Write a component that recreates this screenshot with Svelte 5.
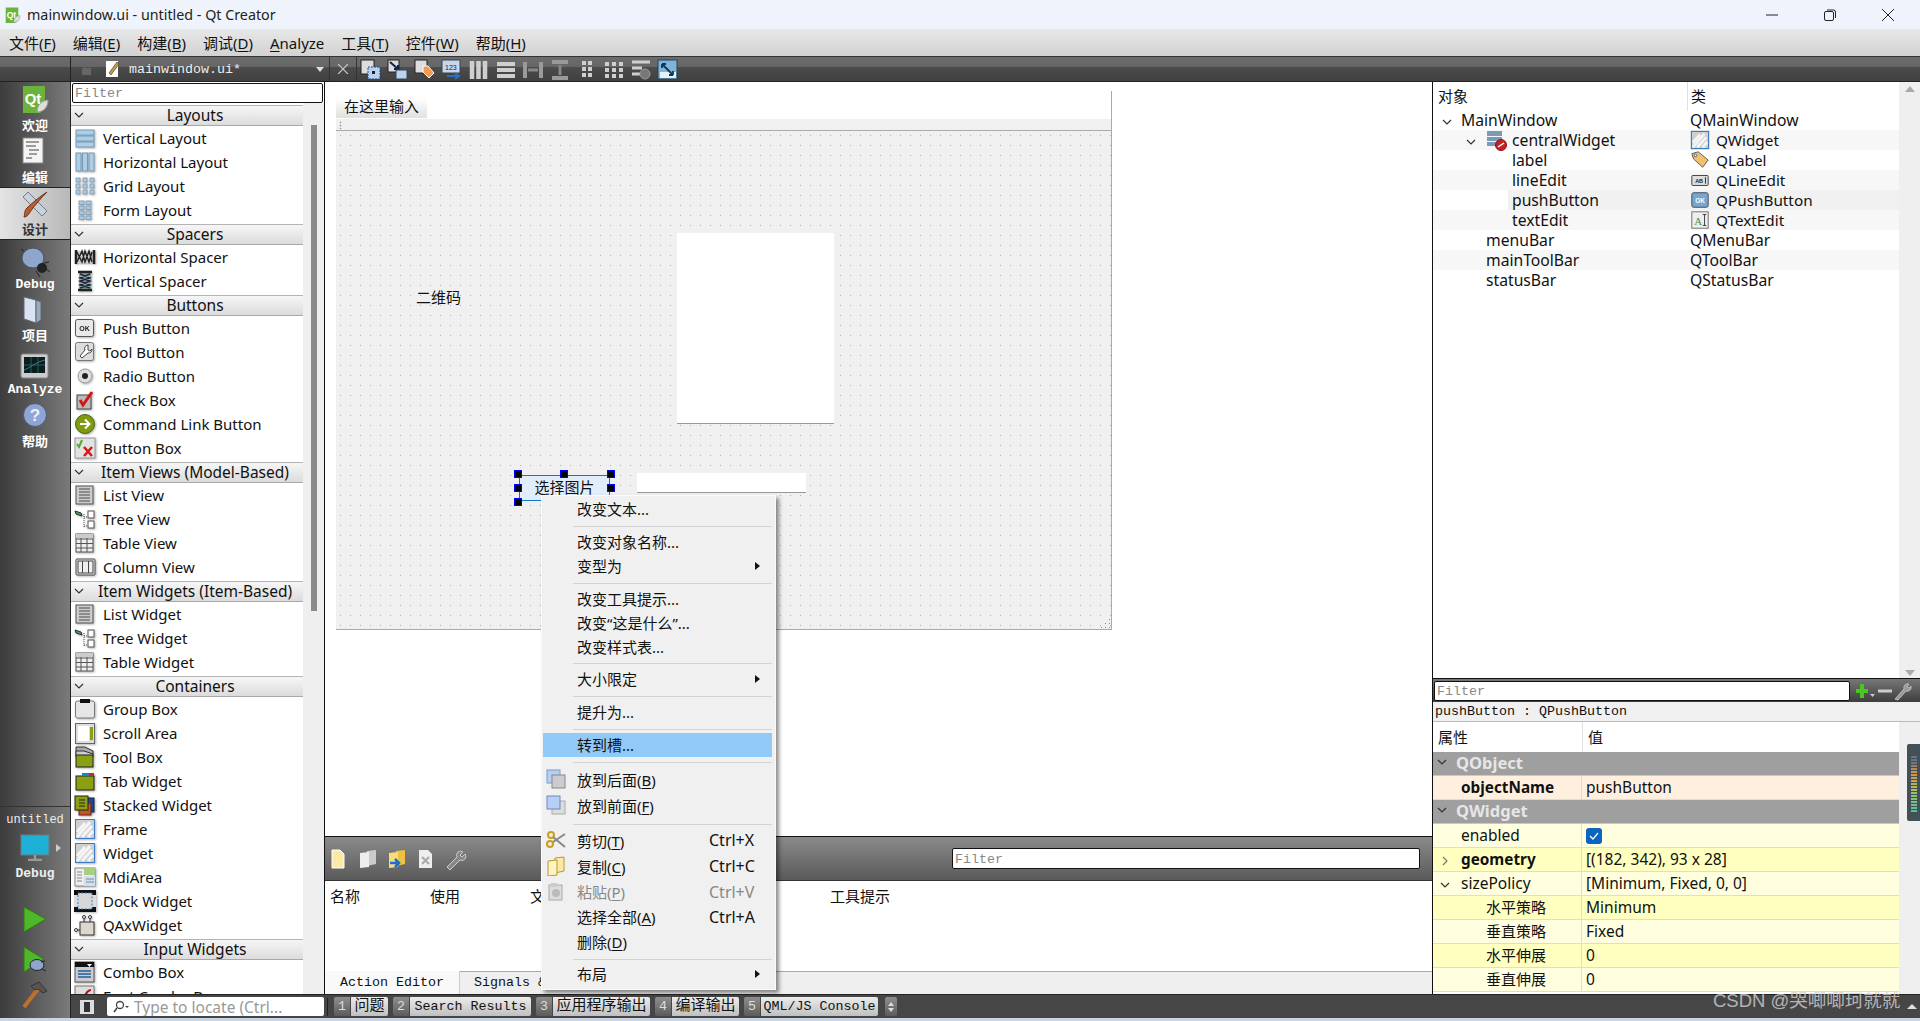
<script>
  const box = '<rect x="2" y="2" width="17" height="18" fill="#ccc" stroke="#555"/>';
  const lines = [5,8,11,14,17].map(y => `<path d="M5 ${y}h11" stroke="#777" stroke-width="1.5"/>`).join('');
  const stripes = '<path d="M3 14l8-9M3 19l13-15M8 19l10-11M14 19l5-6" stroke="#f4f4f4" stroke-width="3"/>';
  const cell = (x, y, w = 4, h = 4) => `<rect x="${x}" y="${y}" width="${w}" height="${h}" fill="#a9cbe6" stroke="#7d98ae" stroke-width=".8"/>`;
  const icons = {
    vlayout: [3, 9, 15].map(y => `<rect x="2" y="${y}" width="18" height="5" fill="#a9cfea" stroke="#7d98ae"/>`).join(''),
    hlayout: [2, 8.5, 15].map(x => `<rect x="${x}" y="2" width="5" height="18" fill="#a9cfea" stroke="#7d98ae"/>`).join(''),
    grid: [3, 9, 15].flatMap(y => [2, 9, 16].map(x => cell(x, y))).join(''),
    form: [2, 7, 12, 17].flatMap(y => [5, 12].map(x => cell(x, y, 5, 3.5))).join(''),
    hspacer: '<rect x="1" y="5" width="20" height="12" fill="#ccc"/><path d="M2 4v14M20 4v14" stroke="#222" stroke-width="2.5"/><path d="M3 16l5-11 3 11 4-11 3 11M3 6l5 10 3-11 4 11 3-10" fill="none" stroke="#222" stroke-width="1.4"/>',
    vspacer: '<rect x="5" y="2" width="12" height="18" fill="#8aa"/><path d="M4 2h14M4 20h14" stroke="#222" stroke-width="2.5"/><path d="M6 4l10 4-10 3 10 4-10 3M16 4L6 8l10 3-10 4 10 3" fill="none" stroke="#223" stroke-width="1.4"/>',
    push: '<rect x="1.500" y="2.500" width="18" height="17" rx="2" fill="#e8e8e8" stroke="#555"/><text x="10.500" y="14" font-size="7" font-family="Liberation Sans" font-weight="700" text-anchor="middle" fill="#222">OK</text>',
    tool: '<rect x="1.500" y="1.500" width="18" height="18" rx="2" fill="#ddd" stroke="#777"/><path d="M14 4a3.500 3.500 0 0 0-3 5l-5 6 2 2 6-5a3.500 3.500 0 0 0 4-4l-2 2-2-1v-2z" fill="#fff" stroke="#444"/>',
    radio: '<circle cx="11" cy="11" r="7" fill="#ddd" stroke="#999"/><circle cx="11" cy="11" r="3" fill="#222"/>',
    check: '<rect x="3" y="6" width="14" height="14" fill="#bbb" stroke="#444"/><path d="M6 11l3 5 9-13" fill="none" stroke="#d01818" stroke-width="3"/>',
    cmd: '<circle cx="11" cy="11" r="9.500" fill="#7d9c10" stroke="#4b6608"/><path d="M6 11h9M11 6.500l4.500 4.500-4.500 4.500" fill="none" stroke="#fff" stroke-width="2"/>',
    btnbox: '<rect x="1" y="1" width="20" height="20" fill="#e2e2e2" stroke="#999"/><path d="M3 7l2 3 3-7" fill="none" stroke="#55a830" stroke-width="2"/><path d="M10 10l8 9M18 10l-8 9" stroke="#d01818" stroke-width="2.500"/>',
    list: box + lines,
    tree: '<path d="M1 3l6 2 1 3-6-2z" fill="#5a9a3a" stroke="#234"/><path d="M10 6v14M10 9h4M10 18h4" stroke="#555" stroke-dasharray="1 1"/><rect x="14" y="3" width="6" height="7" fill="#fff" stroke="#555"/><rect x="14" y="13" width="6" height="7" fill="#fff" stroke="#555"/>',
    table: '<rect x="2" y="2" width="17" height="18" fill="#eee" stroke="#555"/><path d="M2 7h17M2 11.500h17M2 16h17M7 2v18M13 2v18" stroke="#555"/><rect x="2" y="2" width="17" height="4" fill="#ccc"/>',
    column: '<rect x="2" y="3" width="19" height="16" rx="1" fill="#eee" stroke="#444"/><path d="M8.500 5v12M14.500 5v12" stroke="#444"/><rect x="4" y="5" width="15" height="12" fill="none" stroke="#444"/>',
    group: '<rect x="1.500" y="3" width="19" height="17" rx="2" fill="#e6e6e6" stroke="#777"/><rect x="6" y="1" width="10" height="4" fill="#111"/>',
    scroll: '<rect x="1.500" y="1.500" width="19" height="20" fill="#ddd" stroke="#666"/><rect x="4" y="4" width="11" height="15" fill="#fff"/><rect x="16" y="5" width="3" height="13" fill="#8aa010"/>',
    toolbox: '<path d="M2 1h9l8 4v3H2z" fill="#aaa" stroke="#333"/><path d="M2 5h8l9 3v3H2z" fill="#ccc" stroke="#333"/><rect x="2" y="9" width="17" height="12" fill="#8aa010" stroke="#222"/>',
    tab: '<rect x="2" y="6" width="18" height="14" fill="#8aa010" stroke="#222"/><rect x="8" y="3" width="7" height="3" fill="#1a7fd0"/><rect x="15" y="3" width="5" height="3" fill="#c03020"/>',
    stacked: '<rect x="12" y="4" width="8" height="14" fill="#1a4aa0" stroke="#123"/><rect x="5" y="9" width="12" height="12" fill="#c0581a" stroke="#622"/><rect x="1" y="2" width="13" height="14" fill="#8aa010" stroke="#222"/><path d="M5 6h6M5 9h6M5 12h6" stroke="#222"/>',
    frame: '<rect x="1.500" y="1.500" width="19" height="19" fill="#cfcfcf" stroke="#3b7cc4"/>' + stripes + '<rect x="1.500" y="1.500" width="19" height="19" fill="none" stroke="#3b7cc4"/>',
    mdi: '<rect x="1" y="2" width="20" height="18" fill="#eee" stroke="#888"/><rect x="10" y="2" width="11" height="7" fill="#a6cf80"/><rect x="10" y="10" width="11" height="10" fill="#cfe0f2"/><path d="M3 6h5M3 9h5M3 12h5M3 15h5M12 13h8M12 16h8" stroke="#888"/>',
    dock: '<rect x="0" y="0" width="22" height="22" fill="#111"/><rect x="0" y="5" width="22" height="12" fill="#ddd"/><rect x="4" y="3" width="14" height="16" fill="#d8d8d8" stroke="#3b7cc4" stroke-dasharray="2 1.500"/>',
    qax: '<rect x="6" y="8" width="14" height="13" fill="#dcd8cc" stroke="#333"/><path d="M10 8V4M16 8V4M6 16H2" stroke="#333"/><circle cx="10" cy="3" r="1.500" fill="#fff" stroke="#333"/><circle cx="16" cy="3" r="1.500" fill="#fff" stroke="#333"/><circle cx="2" cy="16" r="1.500" fill="#fff" stroke="#333"/>',
    combo: '<rect x="1" y="1" width="19" height="20" fill="#ccc" stroke="#555"/><rect x="1" y="1" width="19" height="5" fill="#111"/><path d="M13 3h5l-2.500 3z" fill="#fff"/><path d="M4 10h13M4 13h13M4 16h13" stroke="#4a78b0" stroke-width="2"/>',
    font: '<rect x="1" y="1" width="19" height="20" fill="#ddd" stroke="#777"/><path d="M6 20c4-4 5-15 11-15" fill="none" stroke="#b01818" stroke-width="2"/>',
    label: '<path d="M2 4l7-2 11 9-6 8L4 10z" fill="#f0c070" stroke="#555"/><circle cx="6" cy="6" r="1.500" fill="#fff" stroke="#555"/>',
    lineedit: '<rect x="2" y="6" width="18" height="11" rx="1" fill="#ddd" stroke="#333"/><text x="10" y="14" font-size="6" font-family="Liberation Sans" font-weight="700" text-anchor="middle" fill="#222">AB</text><path d="M17 8v7" stroke="#222"/>',
    pushblue: '<rect x="2" y="3" width="18" height="16" rx="2" fill="#7aa6cc" stroke="#345"/><text x="11" y="14" font-size="7" font-family="Liberation Sans" font-weight="700" text-anchor="middle" fill="#fff">OK</text>',
    textedit: '<rect x="2" y="2" width="18" height="18" fill="#eee" stroke="#666"/><text x="9" y="16" font-size="12" font-family="Liberation Serif" text-anchor="middle" fill="#4a8a4a">A</text><path d="M14 5h4M16 5v12M14 17h4" stroke="#333"/>',
    central: '<rect x="1" y="1" width="15" height="5" fill="#7a9ab8"/><rect x="1" y="7" width="15" height="4" fill="#7a9ab8"/><rect x="1" y="12" width="15" height="4" fill="#7a9ab8"/><circle cx="15" cy="15" r="5.500" fill="#c82020" stroke="#812"/><path d="M12 17l6-4" stroke="#fff" stroke-width="1.500"/>'
  };
  const sections = [
    ['Layouts', [['Vertical Layout','vlayout'],['Horizontal Layout','hlayout'],['Grid Layout','grid'],['Form Layout','form']]],
    ['Spacers', [['Horizontal Spacer','hspacer'],['Vertical Spacer','vspacer']]],
    ['Buttons', [['Push Button','push'],['Tool Button','tool'],['Radio Button','radio'],['Check Box','check'],['Command Link Button','cmd'],['Button Box','btnbox']]],
    ['Item Views (Model-Based)', [['List View','list'],['Tree View','tree'],['Table View','table'],['Column View','column']]],
    ['Item Widgets (Item-Based)', [['List Widget','list'],['Tree Widget','tree'],['Table Widget','table']]],
    ['Containers', [['Group Box','group'],['Scroll Area','scroll'],['Tool Box','toolbox'],['Tab Widget','tab'],['Stacked Widget','stacked'],['Frame','frame'],['Widget','frame'],['MdiArea','mdi'],['Dock Widget','dock'],['QAxWidget','qax']]],
    ['Input Widgets', [['Combo Box','combo'],['Font Combo Box','font']]]
  ];
  const menuBar = [['文件(','F',')'],['编辑(','E',')'],['构建(','B',')'],['调试(','D',')'],['','A','nalyze'],['工具(','T',')'],['控件(','W',')'],['帮助(','H',')']];
  const contextMenu = [
    {p:'改变文本...'},{sep:9},{p:'改变对象名称...'},{p:'变型为',sub:1},{sep:9},{p:'改变工具提示...'},{p:'改变“这是什么”...'},{p:'改变样式表...'},{sep:8},
    {p:'大小限定',sub:1},{sep:9},{p:'提升为...'},{sep:9},{p:'转到槽...',hi:1},{sep:10},
    {p:'放到后面(',u:'B',a:')',h:26,ic:'back'},{p:'放到前面(',u:'F',a:')',h:26,ic:'front'},{sep:9},
    {p:'剪切(',u:'T',a:')',k:'Ctrl+X',h:26,ic:'cut'},{p:'复制(',u:'C',a:')',k:'Ctrl+C',h:26,ic:'copy'},{p:'粘贴(',u:'P',a:')',k:'Ctrl+V',h:25,off:1,ic:'paste'},
    {p:'选择全部(',u:'A',a:')',k:'Ctrl+A',h:25},{p:'删除(',u:'D',a:')',h:25},{sep:7},{p:'布局',sub:1}
  ];
  const menuIcons = {
    back:'<rect x="1" y="1" width="13" height="13" fill="#b6cff2" stroke="#7a9ad0"/><rect x="6" y="6" width="13" height="13" fill="#ccc" stroke="#888"/>',
    front:'<rect x="6" y="6" width="13" height="13" fill="#ddd" stroke="#aaa"/><rect x="1" y="1" width="13" height="13" fill="#b6cff2" stroke="#6a8ac0"/>',
    cut:'<circle cx="4" cy="14" r="3" fill="none" stroke="#c8a020" stroke-width="2"/><circle cx="5" cy="5" r="3" fill="none" stroke="#c8a020" stroke-width="2"/><path d="M7 12L19 4M7 7l12 10" stroke="#888" stroke-width="2"/>',
    copy:'<path d="M9 2l9-1v14l-9 2z" fill="#fbe9a6" stroke="#b89a30"/><path d="M2 5l9-1v15l-9 1z" fill="#fff3c0" stroke="#b89a30"/>',
    paste:'<rect x="3" y="3" width="13" height="15" fill="#ddd" stroke="#aaa"/><circle cx="10" cy="11" r="4" fill="#bbb"/><rect x="5" y="1" width="6" height="4" fill="#ccc"/>'
  };
  const tools = [
    '<rect x="1" y="1" width="13" height="14" fill="#ddd" stroke="#222"/><rect x="8" y="8" width="12" height="12" fill="#bcd2ec" stroke="#1a4a90" stroke-dasharray="2 1"/><rect x="12" y="12" width="3" height="3" fill="#124"/>',
    '<rect x="1" y="1" width="11" height="12" fill="#ddd" stroke="#222"/><path d="M3 3l8 7M7 10h4V6" stroke="#124" stroke-width="2" fill="none"/><rect x="9" y="11" width="11" height="9" fill="#bcd2ec" stroke="#345"/>',
    '<rect x="1" y="1" width="12" height="13" fill="#ddd" stroke="#222"/><path d="M9 7h5l6 7-5 5-6-6z" fill="#f39a50" stroke="#fff"/>',
    '<rect x="1" y="1" width="18" height="13" fill="#c9d6ea" stroke="#345"/><text x="4" y="11" font-size="7" font-family="Liberation Sans" fill="#124">123</text><path d="M6 17h12M14 14l4 3-4 3" fill="none" stroke="#2a70c0" stroke-width="2"/>',
    '<path d="M4 2v18M10.500 2v18M17 2v18" stroke="#cfcfcf" stroke-width="4.500"/>',
    '<path d="M2 5h18M2 11h18M2 17h18" stroke="#cfcfcf" stroke-width="4"/>',
    '<path d="M3 3v16M19 3v16" stroke="#9a9a9a" stroke-width="4"/><path d="M6 11h10" stroke="#888" stroke-width="3"/>',
    '<path d="M3 3h16M3 19h16" stroke="#9a9a9a" stroke-width="4"/><path d="M11 6v10" stroke="#888" stroke-width="3"/>',
    '<path d="M6 4h4M12 4h4M6 10h4M12 10h4M6 16h4M12 16h4" stroke="#cfcfcf" stroke-width="4"/>',
    '<path d="M2 5h4M9 5h4M16 5h4M2 11h4M9 11h4M16 11h4M2 17h4M9 17h4M16 17h4" stroke="#cfcfcf" stroke-width="4"/>',
    '<path d="M2 3h18M2 9h10M2 15h8" stroke="#cfcfcf" stroke-width="3"/><circle cx="15" cy="15" r="5" fill="#777" stroke="#999"/>',
    '<rect x="1" y="1" width="19" height="19" fill="#7fb3d8" stroke="#246"/><rect x="3" y="13" width="16" height="6" fill="#eee"/><path d="M5 5l11 11M5 5h4M5 5v4M16 16h-4M16 16v-4" stroke="#0a3a5a" stroke-width="1.800" fill="none"/>'
  ];
  const modeIcons = {
    qt:'<path d="M3 1h22v22l-5 5H3z" fill="#6cb33e"/><text x="13" y="19" font-size="15" font-weight="700" font-family="Liberation Sans" text-anchor="middle" fill="#fff">Qt</text><path d="M17 27c0-7 4-11 11-12 0 7-4 12-11 12z" fill="#ddd" stroke="#999"/>',
    edit:'<rect x="3" y="1" width="20" height="25" fill="#f4f4f4" stroke="#888"/><path d="M6 5h13M6 9h10M9 13h10M9 17h8M6 21h6" stroke="#444"/>',
    design:'<path d="M3 8l5-5 19 19-5 5z" fill="#c8d2dc" stroke="#778"/><path d="M4 28c3 0 4-2 6-5 5-7 12-15 17-20-6 4-14 10-20 16-3 3-2 6-3 9z" fill="#b8602a" stroke="#632"/>',
    bug:'<path d="M5 5L1 2M26 22l4 3M16 24l4 6M24 16l5-1" stroke="#222"/><ellipse cx="13" cy="11" rx="11" ry="10" fill="#8ea6cc" stroke="#455"/><ellipse cx="22" cy="21" rx="5" ry="5" fill="#222"/>',
    folder:'<path d="M4 2l12 3v23L4 24z" fill="#d8e4f4" stroke="#667"/><path d="M16 5l5 2v18l-5 3z" fill="#9ab" stroke="#667"/>',
    scope:'<rect x="1" y="2" width="27" height="24" rx="2" fill="#ccc" stroke="#888"/><rect x="4" y="5" width="21" height="16" fill="#0a1e22"/><path d="M4 13h21M11 5v16M18 5v16" stroke="#2a5a5a"/><path d="M4 18c6-2 12-8 21-10" stroke="#3a7a7a" fill="none"/>',
    help:'<circle cx="15" cy="14" r="11.500" fill="#8ea6d6" stroke="#556"/><text x="15" y="20" font-size="17" font-family="Liberation Sans" text-anchor="middle" fill="#eef">?</text>',
    monitor:'<rect x="1" y="1" width="28" height="20" fill="#1fb0d8" stroke="#777"/><path d="M15 21v4M8 26h14" stroke="#999" stroke-width="2.500"/>',
    play:'<path d="M3 1l22 12L3 26z" fill="#4fb82a" stroke="#2f7a10"/>',
    playdbg:'<path d="M3 1l20 12L3 26z" fill="#4fb82a" stroke="#2f7a10"/><ellipse cx="16" cy="19" rx="7" ry="5.500" fill="#8ea6cc" stroke="#223"/><path d="M21 23l4 2M20 16l4-1" stroke="#222"/>',
    hammer:'<path d="M3 26L17 8" stroke="#c0702a" stroke-width="4"/><path d="M10 5l8-4 8 9-4 2-5-4-3 1z" fill="#555" stroke="#333"/>'
  };
  const modes = [['qt','欢迎'],['edit','编辑'],['design','设计',1],['bug','Debug'],['folder','项目'],['scope','Analyze'],['help','帮助']];
  const tree = [
    {n:'MainWindow',c:'QMainWindow',d:1461,open:1445},
    {n:'centralWidget',c:'QWidget',d:1512,open:1469,ni:'central',i:'frame',alt:1},
    {n:'label',c:'QLabel',d:1512,i:'label'},
    {n:'lineEdit',c:'QLineEdit',d:1512,i:'lineedit',alt:1},
    {n:'pushButton',c:'QPushButton',d:1512,i:'pushblue',sel:1},
    {n:'textEdit',c:'QTextEdit',d:1512,i:'textedit',alt:1},
    {n:'menuBar',c:'QMenuBar',d:1486},
    {n:'mainToolBar',c:'QToolBar',d:1486,alt:1},
    {n:'statusBar',c:'QStatusBar',d:1486}
  ];
  const props = [
    {group:'QObject'},
    {n:'objectName',v:'pushButton',b:1,t:'peach'},
    {group:'QWidget'},
    {n:'enabled',chk:1,t:'y1'},
    {n:'geometry',v:'[(182, 342), 93 x 28]',b:1,t:'y2',car:'r'},
    {n:'sizePolicy',v:'[Minimum, Fixed, 0, 0]',t:'y1',car:'d'},
    {n:'水平策略',v:'Minimum',t:'y2',sub:1},
    {n:'垂直策略',v:'Fixed',t:'y1',sub:1},
    {n:'水平伸展',v:'0',t:'y2',sub:1},
    {n:'垂直伸展',v:'0',t:'y1',sub:1}
  ];
  const actionTools = [
    '<path d="M3 2h8l4 4v14H3z" fill="#fbeaa6" stroke="#fff"/>',
    '<path d="M9 3l9-1v14l-9 2z" fill="#ccc"/><path d="M2 5l9-1v15l-9 1z" fill="#eee"/>',
    '<path d="M9 3l9-1v14l-9 2z" fill="#f0c040"/><path d="M2 5l9-1v15l-9 1z" fill="#f7dd80"/><path d="M3 15h7M8 11l4 4-4 4" stroke="#1a70d0" stroke-width="2.500" fill="none"/>',
    '<path d="M3 2h9l4 4v14H3z" fill="#eee"/><path d="M6 9l7 7M13 9l-7 7" stroke="#aaa" stroke-width="2"/>',
    '<path d="M2 19l10-10a4 4 0 0 1 6-5l-3 3 2 2 3-3a4 4 0 0 1-5 6L5 22z" fill="#888" stroke="#ccc"/>'
  ];
  const outputs = [['1','问题',37,1],['2','Search Results',121],['3','应用程序输出',97,1],['4','编译输出',67,1],['5','QML/JS Console',117]];
</script>

{#snippet chev(kind)}
  <svg class="chev" width="10" height="10" viewBox="0 0 10 10">
    {#if kind === 'r'}
      <path d="M3 1l4 4-4 4" fill="none" stroke="#777" stroke-width="1.200"/>
    {:else}
      <path d="M1 3l4 4 4-4" fill="none" stroke="#333" stroke-width="1.200"/>
    {/if}
  </svg>
{/snippet}

{#snippet wicon(name)}
  <svg class="wi" width="22" height="22" viewBox="0 0 22 22">{@html icons[name]}</svg>
{/snippet}

<div class="win">
  <header class="title">
    <svg class="qt" width="18" height="16" viewBox="0 0 28 28">{@html modeIcons.qt}</svg>
    <span>mainwindow.ui - untitled - Qt Creator</span>
    <div class="wctl">
      <svg width="12" height="12" viewBox="0 0 12 12"><path d="M0 6h12" stroke="#222"/></svg>
      <svg width="12" height="12" viewBox="0 0 12 12"><rect x=".5" y="2.500" width="9" height="9" rx="1.500" fill="none" stroke="#222"/><path d="M3 1h6.500a2 2 0 0 1 2 2v6" fill="none" stroke="#222"/></svg>
      <svg width="12" height="12" viewBox="0 0 12 12"><path d="M0 0l12 12M12 0L0 12" stroke="#222"/></svg>
    </div>
  </header>

  <nav class="menubar">
    {#each menuBar as m}
      <span>{m[0]}<u>{m[1]}</u>{m[2]}</span>
    {/each}
  </nav>

  <div class="docbar">
    <div class="docleft"></div>
    <svg class="lock" width="14" height="14" viewBox="0 0 14 14"><rect x="1" y="6" width="9" height="7" fill="#666"/><path d="M4 6V3a3 3 0 0 1 6 0" fill="none" stroke="#666" stroke-width="1.500"/></svg>
    <svg class="docic" width="14" height="18" viewBox="0 0 14 18"><path d="M1 1h12v16H1z" fill="#fff"/><path d="M4 13L12 2l2 2-8 11z" fill="#c89a40" stroke="#333" stroke-width=".6"/></svg>
    <span class="docname">mainwindow.ui*</span>
    <span class="dd"></span>
    <span class="vsep first"></span>
    <svg class="closex" width="10" height="10" viewBox="0 0 10 10"><path d="M0 0l10 10M10 0L0 10" stroke="#ccc" stroke-width="1.200"/></svg>
    <span class="vsep"></span>
    <div class="tools">
      {#each tools as t}
        <svg width="21" height="21" viewBox="0 0 21 21">{@html t}</svg>
      {/each}
    </div>
  </div>

  <div class="main">
    <aside class="modes">
      {#each modes as m}
        <div class="mode" class:on={m[2]}>
          <svg width="30" height="30" viewBox="0 0 30 30">{@html modeIcons[m[0]]}</svg>
          <span>{m[1]}</span>
        </div>
      {/each}
      <div class="target">
        <span class="tname">untitled</span>
        <div class="tmon">
          <svg width="30" height="27" viewBox="0 0 30 27">{@html modeIcons.monitor}</svg>
          <i></i>
        </div>
        <span class="tcfg">Debug</span>
        <svg class="run r1" width="28" height="28" viewBox="0 0 28 28">{@html modeIcons.play}</svg>
        <svg class="run r2" width="28" height="28" viewBox="0 0 28 28">{@html modeIcons.playdbg}</svg>
        <svg class="run" width="28" height="28" viewBox="0 0 28 28">{@html modeIcons.hammer}</svg>
      </div>
    </aside>

    <div class="stack">
      <div class="work">
        <section class="wbox">
          <div class="wfilter"><div class="field mono">Filter</div></div>
          <div class="wbody">
            <div class="wlist">
              {#each sections as s}
                <div class="shead">{@render chev()}<span>{s[0]}</span></div>
                {#each s[1] as it}
                  <div class="witem">{@render wicon(it[1])}<span>{it[0]}</span></div>
                {/each}
              {/each}
            </div>
            <div class="wscroll"><div class="wthumb"></div></div>
          </div>
        </section>

        <section class="center">
          <div class="canvas">
            <div class="form">
              <div class="fmenu"><span>在这里输入</span></div>
              <div class="ftool"><i></i></div>
              <div class="fbody">
                <span class="flabel">二维码</span>
                <div class="ftext"></div>
                <div class="fline"></div>
                <div class="fbtn">选择图片</div>
                {#each [[0,0],[46,0],[93,0],[0,14],[93,14],[0,28]] as h}
                  <i class="handle" style="left:{514 - 336 + h[0]}px;top:{470 - 131 + h[1]}px"></i>
                {/each}
                <svg class="grip" width="12" height="12" viewBox="0 0 12 12"><path d="M10 2h1v1h-1zM10 6h1v1h-1zM6 6h1v1H6zM10 10h1v1h-1zM6 10h1v1H6zM2 10h1v1H2z" fill="#888"/></svg>
              </div>
            </div>
          </div>
          <div class="action">
            <div class="atool">
              <div class="aicons">
                {#each actionTools as t}
                  <svg width="22" height="22" viewBox="0 0 22 22">{@html t}</svg>
                {/each}
              </div>
              <div class="field mono afilter">Filter</div>
            </div>
            <div class="ahead">
              <span class="c1">名称</span><span class="c2">使用</span><span class="c3">文本</span><span class="c4">工具提示</span>
            </div>
            <div class="ablank"></div>
            <div class="atabs">
              <span class="tabon mono">Action Editor</span>
              <span class="taboff mono">Signals &amp; Slots Editor</span>
            </div>
          </div>
        </section>

        <section class="right">
          <div class="inspector">
            <div class="itree">
              <div class="ihead"><span>对象</span><span>类</span></div>
              {#each tree as r}
                <div class="trow" class:alt={r.alt} class:sel={r.sel}>
                  <div class="tc1">
                    {#if r.open}<span class="tcar" style="left:{r.open - 1433 - 3}px">{@render chev()}</span>{/if}
                    {#if r.ni}<svg class="tni" width="21" height="21" viewBox="0 0 21 21">{@html icons[r.ni]}</svg>{/if}
                    <span style="padding-left:{r.d - 1433}px">{r.n}</span>
                  </div>
                  <div class="tc2" class:noi={!r.i}>
                    {#if r.i}<svg width="20" height="20" viewBox="0 0 22 22">{@html icons[r.i]}</svg>{/if}
                    <span>{r.c}</span>
                  </div>
                </div>
              {/each}
            </div>
            <div class="vbar"><b class="up"></b><b class="down"></b></div>
          </div>

          <div class="pfilter">
            <div class="field mono">Filter</div>
            <svg width="22" height="20" viewBox="0 0 22 20"><path d="M8 3v14M2 10h12" stroke="#46c81e" stroke-width="4"/><path d="M16 13h5l-2.500 3z" fill="#ccc"/></svg>
            <svg width="16" height="20" viewBox="0 0 16 20"><path d="M1 10h14" stroke="#ccc" stroke-width="3"/></svg>
            <svg width="18" height="20" viewBox="0 0 18 20"><path d="M1 18L10 8a4 4 0 0 1 5-5l-2 3 2 1 2-2a4 4 0 0 1-5 5l-8 9z" fill="#999" stroke="#bbb"/></svg>
          </div>
          <div class="pobj mono">pushButton : QPushButton</div>
          <div class="peditor">
            <div class="plist">
              <div class="phead"><span>属性</span><span>值</span></div>
              {#each props as p}
                {#if p.group}
                  <div class="pgroup">{@render chev()}<span>{p.group}</span></div>
                {:else}
                  <div class="prow {p.t}">
                    <div class="pn" class:bold={p.b} class:sub={p.sub}>
                      {#if p.car}<span class="pcar">{@render chev(p.car)}</span>{/if}
                      <span>{p.n}</span>
                    </div>
                    <div class="pv">
                      {#if p.chk}
                        <svg width="16" height="16" viewBox="0 0 16 16"><rect width="16" height="16" rx="3" fill="#0a64c0"/><path d="M4 8l3 3 5-6" fill="none" stroke="#fff" stroke-width="1.200"/></svg>
                      {:else}{p.v}{/if}
                    </div>
                  </div>
                {/if}
              {/each}
            </div>
            <div class="pbar"><div class="mini"></div></div>
          </div>
        </section>
      </div>

      <footer class="outbar">
        <span class="toggle"><i></i></span>
        <div class="locate">
          <svg width="18" height="14" viewBox="0 0 18 14"><circle cx="8" cy="5" r="3.500" fill="none" stroke="#444" stroke-width="1.300"/><path d="M5 8l-3 4" stroke="#444" stroke-width="1.500"/><path d="M13 6h4l-2 2z" fill="#444"/></svg>
          <span>Type to locate (Ctrl...</span>
        </div>
        <span class="osep"></span>
        {#each outputs as o}
          <div class="obtn"><b>{o[0]}</b><span class:cjk={o[3]} style="width:{o[2]}px">{o[1]}</span></div>
        {/each}
        <div class="ostep"><i></i><i></i></div>
        <div class="ocorner"></div>
      </footer>
    </div>
  </div>
  <div class="edge"></div>

  <div class="cmenu">
    {#each contextMenu as m}
      {#if m.sep}
        <div class="msep" style="height:{m.sep}px"></div>
      {:else}
        <div class="mitem" class:hi={m.hi} class:off={m.off} style="height:{m.h || 24}px">
          {#if m.ic}<svg class="mic" width="20" height="20" viewBox="0 0 20 20">{@html menuIcons[m.ic]}</svg>{/if}
          <span class="mt">{m.p}{#if m.u}<u>{m.u}</u>{m.a}{/if}</span>
          {#if m.k}<span class="mk">{m.k}</span>{/if}
          {#if m.sub}<i class="marrow"></i>{/if}
        </div>
      {/if}
    {/each}
  </div>

  <div class="mark">CSDN @哭唧唧珂就就</div>
</div>

<style>
  :global(body) { margin: 0; overflow: hidden; }
  .win {
    position: relative; width: 1920px; height: 1021px; display: flex; flex-direction: column; overflow: hidden;
    font-family: "Noto Sans", "Noto Sans CJK SC", sans-serif; font-size: 15px; color: #111; background: #fff;
  }
  .mono { font-family: "Liberation Mono", "Noto Sans CJK SC", monospace; }
  u { text-underline-offset: 2px; }

  .title { height: 29px; background: #eff3fb; display: flex; align-items: center; flex: none; font-size: 14.3px; color: #222; }
  .qt { margin: 0 6px 0 3px; }
  .wctl { margin-left: auto; display: flex; gap: 46px; padding-right: 26px; }
  .wctl svg { display: block; }

  .menubar { height: 27px; flex: none; display: flex; align-items: center; padding-left: 9px; gap: 17px; background: linear-gradient(#e8e8e8, #d2d2d2); font-size: 15px; border-bottom: 1px solid #333; }
  .menubar span { white-space: nowrap; }

  .docbar { height: 25px; flex: none; display: flex; align-items: center; background: linear-gradient(#6c6c6c 0, #666 40%, #4c4c4c 42%, #404040 100%); border-bottom: 1px solid #222; box-sizing: border-box; }
  .docleft { width: 70px; height: 100%; border-right: 1px solid #222; flex: none; }
  .lock { margin-left: 10px; flex: none; }
  .docic { margin-left: 10px; flex: none; }
  .docname { margin-left: 10px; width: 112px; font: 13.33px "Liberation Mono", monospace; color: #eee; }
  .dd { margin-left: 75px; border: 4px solid transparent; border-top: 5px solid #ddd; border-bottom: 0; flex: none; }
  .vsep { width: 1px; height: 100%; background: #333; flex: none; }
  .vsep.first { margin-left: 5px; }
  .closex { margin: 0 8px; flex: none; }
  .tools { display: flex; gap: 6px; margin-left: 3px; }
  .tools svg { display: block; flex: none; }

  .main { flex: 1; min-height: 0; display: flex; }
  .edge { height: 3px; flex: none; background: #c9d5e4; }

  .modes { width: 70px; flex: none; display: flex; flex-direction: column; background: linear-gradient(90deg, #3c3c3c, #7a7a7a); border-right: 1px solid #222; }
  .mode { height: 52.7px; flex: none; display: flex; flex-direction: column; align-items: center; justify-content: flex-end; padding-bottom: 1px; box-sizing: border-box; color: #fff; font: 700 13px "Liberation Mono", "Noto Sans CJK SC", monospace; }
  .mode svg { flex: none; margin-bottom: 0; }
  .mode.on { background: linear-gradient(90deg, #e4e4e4, #b8b8b8); color: #333; border-top: 1px solid #222; border-bottom: 1px solid #222; }
  .target { margin-top: auto; border-top: 1px solid #333; display: flex; flex-direction: column; align-items: center; color: #eee; padding: 5px 0 9px; font: 12px "Liberation Mono", monospace; }
  .tname { line-height: 16px; }
  .tmon { display: flex; align-items: center; margin-top: 6px; position: relative; }
  .tmon i { position: absolute; left: 36px; top: 10px; border: 4px solid transparent; border-left: 5px solid #ccc; border-right: 0; }
  .tcfg { font-weight: 700; font-size: 13px; line-height: 16px; margin: 5px 0 24px; }
  .run { flex: none; }
  .r1 { margin-bottom: 12px; }
  .r2 { margin-bottom: 7px; }

  .stack { flex: 1; min-width: 0; display: flex; flex-direction: column; }
  .work { flex: 1; min-height: 0; display: flex; }

  .field { background: #fff; border: 1px solid #111; border-radius: 2px; box-sizing: border-box; color: #888; font-size: 13.33px; line-height: 20px; padding-left: 2px; }

  .wbox { width: 253px; flex: none; display: flex; flex-direction: column; border-right: 1px solid #111; background: #efefef; box-sizing: content-box; }
  .wfilter { height: 21px; flex: none; padding: 1px 1px 0 1px; box-sizing: border-box; background: #fff; }
  .wfilter .field { height: 20px; }
  .wbody { flex: 1; min-height: 0; display: flex; overflow: hidden; }
  .wlist { width: 232px; flex: none; background: #fff; overflow: hidden; }
  .shead { height: 21px; margin-top: 2px; position: relative; display: flex; align-items: center; justify-content: center; box-sizing: border-box; background: linear-gradient(#f6f6f6, #dcdcdc); border-top: 1px solid #b4b4b4; border-bottom: 1px solid #a8a8a8; padding: 0 0 2px 16px; color: #111; font-size: 15.5px; white-space: nowrap; }
  .shead .chev { position: absolute; left: 3px; top: 4px; }
  .witem { height: 24px; display: flex; align-items: center; gap: 7px; padding-left: 3px; white-space: nowrap; }
  .wi { flex: none; filter: drop-shadow(1px 1px 1px rgba(0,0,0,.3)); }
  .wscroll { flex: 1; position: relative; }
  .wthumb { position: absolute; left: 8px; top: 22px; width: 6px; height: 486px; background: #8a8a8a; }

  .center { flex: 1; min-width: 0; display: flex; flex-direction: column; }
  .canvas { flex: 1; min-height: 0; background: #fff; padding: 9px 0 0 11px; overflow: hidden; }
  .form { width: 775px; height: 539px; display: flex; flex-direction: column; border-right: 1px solid #aaa; box-sizing: content-box; }
  .fmenu { height: 27px; flex: none; display: flex; align-items: flex-end; }
  .fmenu span { width: 91px; height: 20px; background: linear-gradient(#fff, #e0e0e0); text-align: center; font-size: 15px; line-height: 17px; }
  .ftool { height: 11px; flex: none; background: #f0f0f0; border-top: 1px solid #fff; border-bottom: 1px solid #aaa; position: relative; box-sizing: content-box; }
  .ftool i { position: absolute; left: 3px; top: 2px; width: 3px; height: 8px; background: radial-gradient(circle, #999 40%, transparent 50%) 0 0 / 3px 3px; }
  .fbody {
    flex: 1; position: relative; background-color: #b0b0b0; border-bottom: 1px solid #aaa;
    background-image: linear-gradient(90deg, transparent 1px, #f0f0f0 1px), linear-gradient(transparent 1px, #f0f0f0 1px);
    background-size: 10px 10px; background-position: 4px 4px;
  }
  .flabel { position: absolute; left: 80px; top: 156px; font-size: 15px; line-height: 20px; }
  .ftext { position: absolute; left: 341px; top: 102px; width: 157px; height: 190px; background: #fff; border-bottom: 1px solid #999; }
  .fline { position: absolute; left: 301px; top: 342px; width: 169px; height: 19px; background: #fff; border-bottom: 1px solid #999; }
  .fbtn { position: absolute; left: 183px; top: 344px; width: 91px; height: 26px; box-sizing: border-box; background: #e1edf9; border: 1px solid #0a78d0; text-align: center; font-size: 15px; line-height: 23px; }
  .handle { position: absolute; width: 6px; height: 6px; background: #000; border: 1px solid #00f; }
  .grip { position: absolute; right: 0; bottom: 0; }

  .action { height: 158px; flex: none; display: flex; flex-direction: column; border-top: 1px solid #111; box-sizing: border-box; }
  .atool { height: 44px; flex: none; display: flex; align-items: center; background: linear-gradient(#8a8a8a, #5a5a5a); border-bottom: 1px solid #333; box-sizing: border-box; }
  .aicons { display: flex; gap: 7px; padding-left: 4px; }
  .aicons svg { flex: none; display: block; }
  .afilter { margin-left: auto; margin-right: 12px; width: 468px; height: 21px; flex: none; line-height: 22px; }
  .ahead { height: 30px; flex: none; position: relative; font-size: 15px; line-height: 31px; }
  .ahead span { position: absolute; top: 0; }
  .c1 { left: 5px; } .c2 { left: 105px; } .c3 { left: 205px; } .c4 { left: 505px; }
  .ablank { flex: 1; }
  .atabs { height: 23px; flex: none; display: flex; background: #efefef; border-top: 1px solid #aaa; box-sizing: border-box; font-size: 13.33px; }
  .tabon { width: 135px; background: #f9f9f9; margin-top: -1px; text-align: center; line-height: 24px; color: #111; border-right: 1px solid #ccc; box-sizing: border-box; }
  .taboff { padding-left: 14px; line-height: 22px; color: #111; white-space: nowrap; }

  .right { width: 488px; flex: none; display: flex; flex-direction: column; border-left: 1px solid #111; box-sizing: border-box; }
  .inspector { height: 596px; flex: none; display: flex; }
  .itree { flex: 1; min-width: 0; font-size: 15.7px; }
  .ihead { height: 28px; display: grid; grid-template-columns: 254px 1fr; font-size: 15px; line-height: 29px; }
  .ihead span { padding-left: 5px; }
  .ihead span + span { border-left: 1px solid #e0e0e0; padding-left: 3px; }
  .trow { height: 20px; display: grid; grid-template-columns: 257px 1fr; line-height: 20px; }
  .alt { background: #f7f7f7; }
  .sel { background: linear-gradient(90deg, #fff 75px, #f1f1f1 75px); }
  .tc1 { position: relative; white-space: nowrap; }
  .tcar { position: absolute; top: 1px; }
  .tni { position: absolute; left: 53px; top: 0; }
  .tc2 { display: flex; align-items: center; gap: 6px; font-size: 15.3px; }
  .tc2.noi { font-size: 15.7px; }
  .tc2 svg { flex: none; }
  .vbar { width: 21px; flex: none; background: #efefef; position: relative; }
  .vbar b { position: absolute; left: 6px; border: 5px solid transparent; }
  .up { top: 4px; border-bottom: 6px solid #aaa !important; border-top: 0 !important; }
  .down { bottom: 2px; border-top: 6px solid #aaa !important; border-bottom: 0 !important; }

  .pfilter { height: 24px; flex: none; display: flex; align-items: center; gap: 1px; padding-left: 1px; background: linear-gradient(#777, #3e3e3e); border-top: 1px solid #111; box-sizing: border-box; }
  .pfilter .field { width: 416px; height: 20px; margin-right: 3px; flex: none; }
  .pfilter svg { flex: none; }
  .pobj { height: 20px; flex: none; background: #f0f0f0; border-bottom: 1px solid #bbb; box-sizing: border-box; font-size: 13.33px; line-height: 19px; padding-left: 2px; color: #111; }
  .peditor { flex: 1; min-height: 0; display: flex; overflow: hidden; }
  .plist { flex: 1; min-width: 0; font-size: 15.5px; }
  .phead { height: 30px; display: grid; grid-template-columns: 149px 1fr; font-size: 15px; line-height: 30px; }
  .phead span { padding-left: 5px; }
  .phead span + span { border-left: 1px solid #e0e0e0; }
  .pgroup { height: 24px; background: #9f9f9f; border-bottom: 1px solid #c8c8c8; box-sizing: border-box; position: relative; color: #e6e6e6; font-weight: 700; font-size: 16.5px; line-height: 21px; padding-left: 23px; }
  .pgroup .chev { position: absolute; left: 4px; top: 5px; }
  .prow { height: 24px; display: grid; grid-template-columns: 149px 1fr; border-bottom: 1px solid #dcdcdc; box-sizing: border-box; line-height: 23px; }
  .peach { background: #ffefdf; }
  .y1 { background: #ffffdf; }
  .y2 { background: #ffffbf; }
  .pn { padding-left: 28px; position: relative; border-right: 1px solid #dcdcdc; white-space: nowrap; }
  .pn.bold { font-weight: 700; font-size: 15.3px; }
  .pn.sub { padding-left: 53px; font-size: 15px; }
  .pcar { position: absolute; left: 7px; top: 1px; }
  .pv { padding-left: 4px; display: flex; align-items: center; }
  .pbar { width: 21px; flex: none; background: #efefef; position: relative; }
  .mini { position: absolute; right: 0; top: 22px; width: 13px; height: 77px; background: #445058; border-radius: 2px 0 0 2px; padding: 11px 3px 8px 4px; box-sizing: border-box; }
  .mini::after {
    content: ""; display: block; height: 100%;
    background-image: repeating-linear-gradient(#445058 0 1px, transparent 1px 3px), linear-gradient(#6a7480 0 12%, #d89040 28%, #a8c060 60%, #50c0a0);
  }

  .outbar { height: 24px; flex: none; display: flex; align-items: center; background: #464646; border-top: 1px solid #222; box-sizing: border-box; position: relative; }
  .toggle { margin-left: 9px; width: 14px; height: 14px; background: #ddd; display: grid; place-items: center; flex: none; }
  .toggle i { width: 6px; height: 10px; background: #333; }
  .locate { margin-left: 13px; width: 217px; height: 19px; background: #fff; border-radius: 2px; display: flex; align-items: center; gap: 4px; padding-left: 5px; box-sizing: border-box; flex: none; color: #999; font-size: 15.5px; white-space: nowrap; overflow: hidden; }
  .locate svg { flex: none; }
  .osep { width: 1px; height: 18px; background: #222; margin: 0 6px 0 3px; flex: none; }
  .obtn { display: flex; height: 19px; margin-right: 5px; flex: none; gap: 1px; }
  .obtn b { width: 16px; background: linear-gradient(#8e8e8e, #5c5c5c); color: #ddd; font: 13.33px/19px "Liberation Mono", monospace; text-align: center; border-radius: 2px 0 0 2px; }
  .obtn span { background: linear-gradient(#ececec, #c0c0c0); color: #111; font: 13.33px/19px "Liberation Mono", "Noto Sans CJK SC", monospace; text-align: center; border-radius: 0 2px 2px 0; white-space: nowrap; }
  .obtn span.cjk { font-size: 15px; }
  .ostep { margin-left: 2px; width: 12px; height: 19px; background: linear-gradient(#8e8e8e, #5c5c5c); display: flex; flex-direction: column; align-items: center; justify-content: center; gap: 2px; border-radius: 2px; }
  .ostep i { border: 3px solid transparent; border-bottom: 4px solid #ddd; border-top: 0; }
  .ostep i + i { border-top: 4px solid #ddd; border-bottom: 0; }
  .ocorner { position: absolute; right: 3px; top: 9px; border: 5px solid transparent; border-bottom: 5px solid #ddd; border-top: 0; }

  .cmenu { position: absolute; left: 541px; top: 495px; width: 235px; height: 495px; box-sizing: border-box; padding: 1px 3px 0 1px; border: 1px solid #fbfbfb; background: #f0f0f0; box-shadow: 3px 3px 4px rgba(0,0,0,.45); font-size: 15px; z-index: 5; }
  .mitem { position: relative; display: flex; align-items: center; padding: 0 0 2px 34px; box-sizing: border-box; color: #111; white-space: nowrap; }
  .mitem.hi { background: #91c9f7; }
  .mitem.off { color: #888; }
  .mic { position: absolute; left: 3px; top: 2px; }
  .mk { position: absolute; left: 166px; font-size: 16px; }
  .marrow { position: absolute; right: 12px; top: 50%; margin-top: -4px; border: 4px solid transparent; border-left: 5px solid #111; border-right: 0; }
  .msep { position: relative; }
  .msep::after { content: ""; position: absolute; left: 30px; right: 0; top: 50%; height: 1px; background: #d4d4d4; }

  .mark { position: absolute; left: 1713px; top: 989px; color: rgba(210,210,210,.8); font: 18.5px/24px "Liberation Sans", "Noto Sans CJK SC", sans-serif; z-index: 6; white-space: nowrap; }
</style>
